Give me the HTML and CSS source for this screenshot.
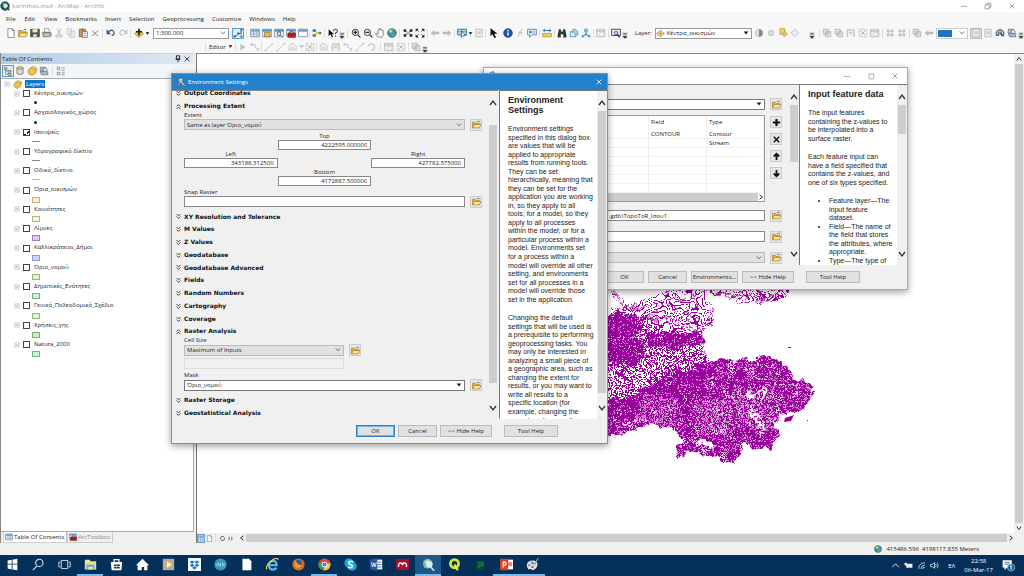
FILE: index.html
```html
<!DOCTYPE html>
<html lang="el">
<head>
<meta charset="utf-8">
<title>korinthos.mxd - ArcMap - ArcInfo</title>
<link rel="stylesheet" href="styles.css">
</head>
<body>
<svg class="sprite" aria-hidden="true">
  <symbol id="new" viewBox="0 0 16 16"><path d="M3 1h7l3 3v11H3z" fill="#fff" stroke="#555"/><path d="M10 1v3h3" fill="none" stroke="#555"/></symbol>
  <symbol id="open" viewBox="0 0 16 16"><path d="M1 14V4h5l1 2h6v3" fill="#e8b93c" stroke="#8d6b1c"/><path d="M1 14l3-6h12l-3 6z" fill="#ffe48a" stroke="#8d6b1c"/><path d="M9 3q3-3 5 1" fill="none" stroke="#3a7b3a" stroke-width="1.5"/></symbol>
  <symbol id="save" viewBox="0 0 16 16"><path d="M1 2h14v12H1z" fill="#55524a" stroke="#333"/><path d="M4 2h8v5H4z" fill="#e9edc2"/><path d="M5 10h6v4H5z" fill="#ddd"/></symbol>
  <symbol id="print" viewBox="0 0 16 16"><path d="M4 1h7l1 6H4z" fill="#fff" stroke="#777"/><path d="M1 7h13l1 5-3 2H2z" fill="#aaa" stroke="#555"/><path d="M4 10h7v3H4z" fill="#eed56a"/></symbol>
  <symbol id="cut" viewBox="0 0 16 16"><path d="M5 1l5 10M11 1L6 11" stroke="#bbb" stroke-width="1.5"/><circle cx="5" cy="13" r="2" fill="none" stroke="#bbb" stroke-width="1.5"/><circle cx="11" cy="13" r="2" fill="none" stroke="#bbb" stroke-width="1.5"/></symbol>
  <symbol id="copy" viewBox="0 0 16 16"><path d="M2 1h7v10H2zM6 5h8v10H6z" fill="#ececec" stroke="#bbb"/></symbol>
  <symbol id="paste" viewBox="0 0 16 16"><path d="M2 2h10v12H2z" fill="#c99a4a" stroke="#6b4b1c"/><path d="M5 1h4v3H5z" fill="#777"/><path d="M7 6h8v9H7z" fill="#fff" stroke="#446"/><path d="M9 9h4M9 12h4" stroke="#55a"/></symbol>
  <symbol id="del" viewBox="0 0 16 16"><path d="M3 4l10 9M13 4L3 13" stroke="#888" stroke-width="1.6"/></symbol>
  <symbol id="undo" viewBox="0 0 16 16"><path d="M3 7q7-7 10 0 0 4-4 5" fill="none" stroke="#2d5590" stroke-width="2"/><path d="M1 2v8h7z" fill="#2d5590"/></symbol>
  <symbol id="redo" viewBox="0 0 16 16"><path d="M13 7q-7-7-10 0 0 4 4 5" fill="none" stroke="#c3c3c3" stroke-width="2"/><path d="M15 2v8H8z" fill="#c3c3c3"/></symbol>
  <symbol id="add" viewBox="0 0 16 16"><path d="M8 3l7 6-7 6-7-6z" fill="#f3c33b" stroke="#9c7a14"/><path d="M8 1v11M3 6h10" stroke="#222" stroke-width="2.6"/></symbol>
  <symbol id="edit" viewBox="0 0 16 16"><path d="M2 13h3l4-4h4V3" fill="none" stroke="#333" stroke-width="1.3"/><path d="M1 12h3v3H1zM7 7h3v3H7zM12 1h3v3h-3zM12 12h3v3h-3z" fill="#2b5f93"/></symbol>
  <symbol id="table" viewBox="0 0 16 16"><path d="M1 2h14v12H1z" fill="#fff" stroke="#3d668f"/><path d="M1 2h14v4H1z" fill="#7eaedb"/><path d="M1 8h14M1 11h14M6 2v12M11 2v12" stroke="#6d8cad"/></symbol>
  <symbol id="catalog" viewBox="0 0 16 16"><path d="M1 2h14v12H1z" fill="#fff" stroke="#3d668f"/><path d="M1 2h14v4H1z" fill="#5b95cf"/><path d="M4 7h9v7H4z" fill="#e8c04a" stroke="#7b6420"/></symbol>
  <symbol id="searchw" viewBox="0 0 16 16"><path d="M1 2h14v12H1z" fill="#fff" stroke="#3d668f"/><path d="M1 2h14v4H1z" fill="#5b95cf"/><circle cx="8" cy="9" r="3" fill="#def" stroke="#345" stroke-width="1.3"/><path d="M10 11l4 4" stroke="#b98c2f" stroke-width="2"/></symbol>
  <symbol id="toolbox" viewBox="0 0 16 16"><path d="M1 2h14v11H1z" fill="#fff" stroke="#3d668f"/><path d="M1 2h14v3H1z" fill="#5b95cf"/><path d="M3 8h12v7H3z" fill="#c8262a" stroke="#701316"/><path d="M6 8V6h6v2M3 11h12" fill="none" stroke="#701316" stroke-width="1.3"/></symbol>
  <symbol id="python" viewBox="0 0 16 16"><path d="M1 2h14v12H1z" fill="#fff" stroke="#3d668f"/><path d="M1 2h14v4H1z" fill="#6b9fd2"/></symbol>
  <symbol id="model" viewBox="0 0 16 16"><path d="M3 4l6 4-6 4M8 8h5" fill="none" stroke="#555"/><path d="M1 2h5v4H1z" fill="#2f6fb6"/><path d="M1 10h5v4H1z" fill="#3e8a45"/><path d="M7 6h4v4H7z" fill="#e8c03c"/><circle cx="13" cy="8" r="2" fill="#3e8a45"/></symbol>
  <symbol id="what" viewBox="0 0 16 16"><path d="M1 2v11l3-3 2 5 2-1-2-4h4z" fill="#111"/><path d="M9 5q0-3 3-3t3 3q0 2-3 3v2M12 12v2" fill="none" stroke="#2750a0" stroke-width="1.8"/></symbol>
  <symbol id="zin" viewBox="0 0 16 16"><circle cx="7" cy="7" r="5" fill="#e9f2fa" stroke="#333" stroke-width="1.5"/><path d="M7 4v6M4 7h6M11 11l4 4" stroke="#222" stroke-width="1.9"/></symbol>
  <symbol id="zout" viewBox="0 0 16 16"><circle cx="7" cy="7" r="5" fill="#e9f2fa" stroke="#333" stroke-width="1.5"/><path d="M4 7h6M11 11l4 4" stroke="#222" stroke-width="1.9"/></symbol>
  <symbol id="pan" viewBox="0 0 16 16"><path d="M4 14l-3-5 1-1 3 2V3h2V1h2v2h2v1h2v7l-2 4z" fill="#fff" stroke="#666" stroke-width="1.2"/></symbol>
  <symbol id="globe" viewBox="0 0 16 16"><circle cx="8" cy="8" r="7" fill="#3d8ccb" stroke="#355"/><path d="M3 4q5-4 8 0l-3 4-3 1zM8 10l5-2q0 4-3 6z" fill="#69b550"/><circle cx="6" cy="5" r="2" fill="#fff" opacity=".6"/></symbol>
  <symbol id="app" viewBox="0 0 16 16"><circle cx="8" cy="8" r="7" fill="#1d5a66" stroke="#17424c"/><path d="M3 5q4-4 8-1l-3 3-3 1z" fill="#5d9d7a"/><circle cx="9" cy="8" r="3" fill="#cfe8ea" stroke="#fff"/><path d="M11 10l4 5" stroke="#333" stroke-width="2"/></symbol>
  <symbol id="fin" viewBox="0 0 16 16"><path d="M1 2h4v4H1zM11 2h4v4h-4zM1 10h4v4H1zM11 10h4v4h-4z" fill="#222"/><path d="M4 5l3 2M12 5L9 7M4 11l3-2M12 11L9 9" stroke="#222" stroke-width="1.5"/></symbol>
  <symbol id="fout" viewBox="0 0 16 16"><path d="M1 1h5L1 6zM15 1h-5l5 5zM1 15h5l-5-5zM15 15h-5l5-5z" fill="#222"/><path d="M2 2l4 4M14 2l-4 4M2 14l4-4M14 14l-4-4" stroke="#222"/></symbol>
  <symbol id="back" viewBox="0 0 16 16"><path d="M1 8l6-5v3h8v4H7v3z" fill="#bcbcbc"/></symbol>
  <symbol id="fwd" viewBox="0 0 16 16"><path d="M15 8L9 3v3H1v4h8v3z" fill="#bcbcbc"/></symbol>
  <symbol id="selfeat" viewBox="0 0 16 16"><path d="M1 2h14v9H1z" fill="#bfe3f0" stroke="#28759a" stroke-width="1.5"/><path d="M8 2v9M1 6h14" stroke="#28759a"/><path d="M7 5v10l3-3h4z" fill="#fff" stroke="#222"/></symbol>
  <symbol id="page" viewBox="0 0 16 16"><path d="M3 2h10v12H3z" fill="#f1f1f1" stroke="#bbb" stroke-width="1.5"/><path d="M6 5h5v5H6z" fill="#ccc"/></symbol>
  <symbol id="ptr" viewBox="0 0 16 16"><path d="M4 0v13l3-3 3 6 3-1-3-6h5z" fill="#111"/></symbol>
  <symbol id="info" viewBox="0 0 16 16"><circle cx="8" cy="8" r="7" fill="#1d58ad" stroke="#123a78"/><path d="M8 7v5" stroke="#fff" stroke-width="2.4"/><circle cx="8" cy="4" r="1.4" fill="#fff"/></symbol>
  <symbol id="bolt" viewBox="0 0 16 16"><path d="M12 1L5 8l3 1-5 6 9-8-3-1z" fill="#ccc" stroke="#ccc"/></symbol>
  <symbol id="popup" viewBox="0 0 16 16"><path d="M1 2h14v9H8l-4 4v-4H1z" fill="#e8f3fa" stroke="#3f7395" stroke-width="1.2"/><path d="M4 5h3v3H4zM9 5h4M9 8h4" stroke="#3f7395" fill="#68a0b9"/></symbol>
  <symbol id="measure" viewBox="0 0 16 16"><path d="M1 9h14v5H1z" fill="#f4d35a" stroke="#9a7a1e"/><path d="M2 4h12M2 4l3-3M2 4l3 3M14 4l-3-3M14 4l-3 3" stroke="#2f62a4" stroke-width="1.4"/></symbol>
  <symbol id="find" viewBox="0 0 16 16"><path d="M3 2h3l1 4h2l1-4h3l2 9v4h-5v-5H6v5H1v-4z" fill="#30353b"/></symbol>
  <symbol id="route" viewBox="0 0 16 16"><path d="M2 6h9v8H2z" fill="#dff0fa" stroke="#3f86ad" stroke-width="1.3"/><path d="M6 8V2h4l4 4v5H9" fill="#9fd0e8" stroke="#3f86ad"/></symbol>
  <symbol id="xy" viewBox="0 0 16 16"><circle cx="8" cy="4" r="2.6" fill="#9cc6e8" stroke="#2b6ba0"/><path d="M8 7v4M3 13l5-3 5 3" fill="none" stroke="#2b6ba0" stroke-width="1.6"/><circle cx="3" cy="13" r="2" fill="#5a9bd0"/><circle cx="13" cy="13" r="2" fill="#5a9bd0"/></symbol>
  <symbol id="time" viewBox="0 0 16 16"><path d="M1 2h13v12H1z" fill="#eee" stroke="#bbb" stroke-width="1.4"/><path d="M1 5h13" stroke="#bbb" stroke-width="2"/><circle cx="9" cy="10" r="3" fill="#fff" stroke="#bbb"/></symbol>
  <symbol id="viewer" viewBox="0 0 16 16"><path d="M1 2h14v10H1z" fill="#eef" stroke="#444" stroke-width="1.5"/><circle cx="8" cy="8" r="3" fill="#a9cfe9" stroke="#345"/><path d="M10 10l4 5" stroke="#334" stroke-width="2"/></symbol>
  <symbol id="contrast" viewBox="0 0 16 16"><circle cx="8" cy="8" r="6" fill="#ddd" stroke="#bbb"/><path d="M8 2a6 6 0 010 12z" fill="#888"/></symbol>
  <symbol id="sun" viewBox="0 0 16 16"><circle cx="8" cy="8" r="4" fill="#ddd" stroke="#ccc" stroke-width="2"/></symbol>
  <symbol id="lyr" viewBox="0 0 16 16"><path d="M3 1h8v9H3z" fill="#f4d46a" stroke="#b08a2a"/><path d="M6 9l5-4 4 5-5 4z" fill="#e7bf4b" stroke="#999"/></symbol>
  <symbol id="dia" viewBox="0 0 16 16"><path d="M8 2l6 6-6 6-6-6z" fill="#eee" stroke="#bbb" stroke-width="1.5"/></symbol>
  <symbol id="ydia" viewBox="0 0 16 16"><path d="M8 2l7 6-7 6-7-6z" fill="#f6dd9a" stroke="#b3863a" stroke-width="1.5"/><path d="M8 5v6M5 8h6" stroke="#8a6a2a"/></symbol>
  <symbol id="g1" viewBox="0 0 16 16"><path d="M2 2h8v8H2zM6 6h8v8H6z" fill="#e2e2e2" stroke="#b5b5b5" stroke-width="1.4"/><path d="M4 12l8-9" stroke="#aaa"/></symbol>
  <symbol id="g2" viewBox="0 0 16 16"><path d="M2 14V3h11v11" fill="#eee" stroke="#b8b8b8" stroke-width="1.6"/><path d="M5 6h5v3H5z" fill="#c4c4c4"/></symbol>
  <symbol id="g3" viewBox="0 0 16 16"><path d="M2 2h12v12H2z" fill="#f1f1f1" stroke="#bbb" stroke-width="1.4" stroke-dasharray="4 2"/><path d="M5 5l6 6M11 5l-6 6" stroke="#b0b0b0" stroke-width="1.4"/></symbol>
  <symbol id="g4" viewBox="0 0 16 16"><path d="M2 5h12M2 11h12M5 2v12M11 2v12" stroke="#bdbdbd" stroke-width="2"/></symbol>
  <symbol id="pause" viewBox="0 0 16 16"><path d="M5 4v8M11 4v8" stroke="#4b7fa8" stroke-width="2.5"/></symbol>
  <symbol id="fresh" viewBox="0 0 16 16"><path d="M3 9q0-6 6-6l3 2M13 7q0 6-6 6l-3-2" fill="none" stroke="#557" stroke-width="2"/></symbol>
  <symbol id="gline" viewBox="0 0 16 16"><path d="M3 13L13 3" stroke="#c5c5c5" stroke-width="1.5"/><path d="M1 12h3v3H1zM12 1h3v3h-3z" fill="#ccc"/></symbol>
  <symbol id="gplay" viewBox="0 0 16 16"><path d="M4 3v10l8-5z" fill="#bcbcbc"/></symbol>
  <symbol id="gnode" viewBox="0 0 16 16"><path d="M3 4h5v5M8 8l6 5" fill="none" stroke="#c5c5c5" stroke-width="1.5"/><path d="M1 2h4v4H1zM11 10h4v4h-4z" fill="#ccc"/></symbol>
  <symbol id="gpoly" viewBox="0 0 16 16"><path d="M2 13V5l6-3 5 4v7h-4V9H6v4z" fill="#f2f2f2" stroke="#c3c3c3" stroke-width="1.3"/></symbol>
  <symbol id="gturn" viewBox="0 0 16 16"><path d="M2 6q6-6 10 0 1 6-5 8" fill="none" stroke="#c3c3c3" stroke-width="2"/></symbol>
  <symbol id="bino" viewBox="0 0 16 16"><path d="M2 12V6q6-7 12 0v6h-4V8H6v4z" fill="#9bb2c6" stroke="#40566b" stroke-width="1.5"/><path d="M8 8l5 6" stroke="#333" stroke-width="1.5"/></symbol>
  <symbol id="disk" viewBox="0 0 16 16"><path d="M2 2h8l2 6H2zM2 9h12v5H4z" fill="#aebdca" stroke="#50606e"/><circle cx="10" cy="6" r="3" fill="#dcecf8" stroke="#50606e"/></symbol>
  <symbol id="chd" viewBox="0 0 8 8"><path d="M1 2l3 3 3-3" fill="none" stroke="#444"/></symbol>
  <symbol id="chu" viewBox="0 0 8 8"><path d="M1 6l3-4 3 4" fill="none" stroke="#333" stroke-width="1.3"/></symbol>
  <symbol id="chdn" viewBox="0 0 8 8"><path d="M1 2l3 4 3-4" fill="none" stroke="#333" stroke-width="1.3"/></symbol>
  <symbol id="chr" viewBox="0 0 8 8"><path d="M2 1l4 3-4 3" fill="none" stroke="#333" stroke-width="1.3"/></symbol>
  <symbol id="chl" viewBox="0 0 8 8"><path d="M6 1L2 4l4 3" fill="none" stroke="#333" stroke-width="1.3"/></symbol>
  <symbol id="tri" viewBox="0 0 8 8"><path d="M1 2h6L4 6z" fill="#111"/></symbol>
  <symbol id="dd" viewBox="0 0 8 10"><path d="M1 1l3 3 3-3M1 5l3 3 3-3" fill="none" stroke="#222" stroke-width="1.3"/></symbol>
  <symbol id="du" viewBox="0 0 8 10"><path d="M1 5l3-3 3 3M1 9l3-3 3 3" fill="none" stroke="#222" stroke-width="1.3"/></symbol>
  <symbol id="grip" viewBox="0 0 6 14"><path d="M0 6h6v8H0z" fill="#d5d5d5"/><path d="M1 8h4M1 11h4l-2 2z" stroke="#333" fill="#333"/></symbol>
  <symbol id="min" viewBox="0 0 10 10"><path d="M1 5.500h8" stroke="#999"/></symbol>
  <symbol id="max" viewBox="0 0 10 10"><path d="M2.500 2.500h6v6h-6z" fill="none" stroke="#999"/></symbol>
  <symbol id="rest" viewBox="0 0 10 10"><path d="M1.500 3.500h5v5h-5zM3.500 3V1.500h5v5H7" fill="none" stroke="#888"/></symbol>
  <symbol id="x" viewBox="0 0 10 10"><path d="M2 2l6 6M8 2L2 8" stroke="currentColor"/></symbol>
  <symbol id="pin" viewBox="0 0 10 10"><path d="M3 1h4v4H3zM2 5.500h6M5 6v3" fill="none" stroke="#222" stroke-width="1.200"/></symbol>
  <symbol id="hammer" viewBox="0 0 16 16"><path d="M3 3l5-2 4 3-2 3 5 6-2 2-6-6-2 5-3 1 3-8z" fill="#b9c6d2" stroke="#3b4a58"/></symbol>
  <symbol id="plus" viewBox="0 0 10 10"><path d="M5 1v8M1 5h8" stroke="#111" stroke-width="2.400"/></symbol>
  <symbol id="bx" viewBox="0 0 10 10"><path d="M2 2l6 6M8 2L2 8" stroke="#111" stroke-width="1.600"/></symbol>
  <symbol id="up" viewBox="0 0 10 10"><path d="M5 9V2M2 5l3-3 3 3" fill="none" stroke="#111" stroke-width="2"/></symbol>
  <symbol id="down" viewBox="0 0 10 10"><path d="M5 1v7M2 5l3 3 3-3" fill="none" stroke="#111" stroke-width="2"/></symbol>
  <symbol id="exp" viewBox="0 0 10 10"><path d="M1.500 1.500h7v7h-7z" fill="#fff" stroke="#aaa"/><path d="M3 5h4" stroke="#666"/></symbol>
  <symbol id="drum" viewBox="0 0 16 16"><path d="M3 3v9q5 4 10 0V3z" fill="#d5d8dc" stroke="#555"/><ellipse cx="8" cy="3" rx="5" ry="2" fill="#f2c84c" stroke="#666"/></symbol>
  <symbol id="treei" viewBox="0 0 16 16"><path d="M2 2h4v4H2zM8 7h5v3H8zM8 12h5v3H8z" fill="#e7c04b" stroke="#666"/><path d="M4 6v7h4M4 8h4" fill="none" stroke="#666"/></symbol>
  <symbol id="opts" viewBox="0 0 16 16"><path d="M2 2h4v4H2zM2 10h4v4H2zM9 3h5M9 7h5M9 11h5M9 14h5" fill="none" stroke="#777" stroke-width="1.200"/></symbol>
  <symbol id="lay" viewBox="0 0 16 16"><path d="M2 6l5-3 7 2v6l-6 4-6-3z" fill="#f0c542" stroke="#9d7b20"/><path d="M4 4l5-3 6 2v5" fill="none" stroke="#c39a31" stroke-width="1.5"/></symbol>
</svg>

<main class="app">
  <header class="titlebar"><svg class="i11"><use href="#app"/></svg><span class="wtitle">korinthos.mxd - ArcMap - ArcInfo</span>
    <div class="wbtns"><button aria-label="Minimize"><svg><use href="#min"/></svg></button><button aria-label="Restore"><svg><use href="#rest"/></svg></button><button aria-label="Close"><svg><use href="#x"/></svg></button></div>
  </header>
  <nav class="menu"><button>File</button><button>Edit</button><button>View</button><button>Bookmarks</button><button>Insert</button><button>Selection</button><button>Geoprocessing</button><button>Customize</button><button>Windows</button><button>Help</button></nav>

  <div class="bar">
    <button aria-label="New"><svg><use href="#new"/></svg></button><button aria-label="Open"><svg><use href="#open"/></svg></button><button aria-label="Save"><svg><use href="#save"/></svg></button><button aria-label="Print"><svg><use href="#print"/></svg></button><button aria-label="Cut"><svg><use href="#cut"/></svg></button><button aria-label="Copy"><svg><use href="#copy"/></svg></button><button aria-label="Paste"><svg><use href="#paste"/></svg></button><button aria-label="Delete"><svg><use href="#del"/></svg></button>
    <i class="sep mid"></i><button aria-label="Undo"><svg><use href="#undo"/></svg></button><button aria-label="Redo"><svg><use href="#redo"/></svg></button>
    <i class="sep mid"></i><button aria-label="Add data"><svg><use href="#add"/></svg></button><button class="caret" aria-label="Add data menu"><svg><use href="#tri"/></svg></button>
    <span class="pick scale"><select aria-label="Map scale"><option>1:300.000</option></select><svg><use href="#chd"/></svg></span>
    <button class="on" aria-label="Editor toolbar"><svg><use href="#edit"/></svg></button>
    <i class="sep wide"></i><button aria-label="Table of contents"><svg><use href="#table"/></svg></button><button aria-label="Catalog"><svg><use href="#catalog"/></svg></button><button aria-label="Search"><svg><use href="#searchw"/></svg></button><button aria-label="ArcToolbox"><svg><use href="#toolbox"/></svg></button><button aria-label="Python"><svg><use href="#python"/></svg></button>
    <i class="sep thin"></i><button aria-label="ModelBuilder"><svg><use href="#model"/></svg></button>
    <i class="sep mid"></i><button aria-label="What's this"><svg><use href="#what"/></svg></button><svg class="grip"><use href="#grip"/></svg>
    <i class="sep wide"></i><button aria-label="Zoom in"><svg><use href="#zin"/></svg></button><button aria-label="Zoom out"><svg><use href="#zout"/></svg></button><button aria-label="Pan"><svg><use href="#pan"/></svg></button><button aria-label="Full extent"><svg><use href="#globe"/></svg></button>
    <i class="sep mid"></i><button aria-label="Fixed zoom in"><svg><use href="#fin"/></svg></button><button aria-label="Fixed zoom out"><svg><use href="#fout"/></svg></button>
    <i class="sep"></i><button aria-label="Back"><svg><use href="#back"/></svg></button><button aria-label="Forward"><svg><use href="#fwd"/></svg></button>
    <i class="sep"></i><button aria-label="Select features"><svg><use href="#selfeat"/></svg></button><button class="caret" aria-label="Select menu"><svg><use href="#tri"/></svg></button><button aria-label="Clear selection"><svg><use href="#page"/></svg></button>
    <i class="sep thin"></i><button aria-label="Select elements"><svg><use href="#ptr"/></svg></button><i class="sep blank"></i><button aria-label="Identify"><svg><use href="#info"/></svg></button><button aria-label="Hyperlink"><svg><use href="#bolt"/></svg></button><button aria-label="HTML popup"><svg><use href="#popup"/></svg></button>
    <i class="sep"></i><button aria-label="Measure"><svg><use href="#measure"/></svg></button>
    <i class="sep"></i><button aria-label="Find"><svg><use href="#find"/></svg></button><button aria-label="Find route"><svg><use href="#route"/></svg></button><button aria-label="Go to XY"><svg><use href="#xy"/></svg></button>
    <i class="sep"></i><button aria-label="Time slider"><svg><use href="#time"/></svg></button><i class="sep"></i><button aria-label="Viewer window"><svg><use href="#viewer"/></svg></button><svg class="grip"><use href="#grip"/></svg>
    <label class="laylab" for="layer">Layer:</label>
    <span class="pick layer"><svg class="lead"><use href="#ydia"/></svg><select id="layer"><option>Κέντρα_οικισμών</option></select><svg><use href="#tri"/></svg></span>
    <button aria-label="Contrast"><svg><use href="#contrast"/></svg></button><button aria-label="Brightness"><svg><use href="#sun"/></svg></button><button aria-label="Transparency"><svg><use href="#lyr"/></svg></button><button aria-label="Swipe"><svg><use href="#dia"/></svg></button>
    <svg class="grip far"><use href="#grip"/></svg><i class="sep"></i>
    <button aria-label="Raster 1"><svg><use href="#g1"/></svg></button><button aria-label="Raster 2"><svg><use href="#g1"/></svg></button><button aria-label="Raster 3"><svg><use href="#g2"/></svg></button><button aria-label="Raster 4"><svg><use href="#g3"/></svg></button><button aria-label="Raster 5"><svg><use href="#time"/></svg></button>
    <i class="sep"></i><button aria-label="Grid 1"><svg><use href="#g4"/></svg></button><button aria-label="Grid 2"><svg><use href="#g4"/></svg></button>
    <i class="sep"></i><button aria-label="Previous"><svg><use href="#g1"/></svg></button><button aria-label="Next"><svg><use href="#back"/></svg></button>
    <span class="pick colour"><b class="chip"></b><select aria-label="Colour"><option></option></select><svg><use href="#chd"/></svg></span>
    <button class="held" aria-label="Layout"><svg><use href="#page"/></svg></button><button aria-label="Page"><svg><use href="#page"/></svg></button><button aria-label="Inspect"><svg><use href="#bino"/></svg></button><button aria-label="Export"><svg><use href="#disk"/></svg></button><svg class="grip"><use href="#grip"/></svg>
  </div>
  <div class="bar two">
    <i class="sep"></i><button class="word">Editor <svg><use href="#tri"/></svg></button><i class="sep thin"></i>
    <button aria-label="Edit tool"><svg><use href="#gplay"/></svg></button><button aria-label="Annotation tool"><svg><use href="#gnode"/></svg></button><i class="sep thin"></i><button aria-label="Straight"><svg><use href="#gline"/></svg></button><button aria-label="Arc"><svg><use href="#gline"/></svg></button><button aria-label="Trace"><svg><use href="#gpoly"/></svg></button><button class="caret" aria-label="Trace menu"><svg><use href="#chd"/></svg></button><button aria-label="Point"><svg><use href="#g3"/></svg></button>
    <i class="sep thin"></i><button aria-label="Vertices"><svg><use href="#gpoly"/></svg></button><button aria-label="Reshape"><svg><use href="#g2"/></svg></button><button aria-label="Cut polygons"><svg><use href="#gnode"/></svg></button><button aria-label="Split"><svg><use href="#gline"/></svg></button><button aria-label="Rotate"><svg><use href="#gturn"/></svg></button>
    <i class="sep wide"></i><button aria-label="Attributes"><svg><use href="#time"/></svg></button><button aria-label="Sketch"><svg><use href="#g3"/></svg></button><i class="sep"></i><button aria-label="Create"><svg><use href="#g1"/></svg></button><svg class="grip"><use href="#grip"/></svg>
  </div>

  <div class="work">
    <aside class="toc">
      <div class="tochead"><span>Table Of Contents</span><span class="pins"><svg><use href="#pin"/></svg><svg><use href="#x"/></svg></span></div>
      <div class="toctools"><button class="on" aria-label="By drawing order"><svg><use href="#treei"/></svg></button><button aria-label="By source"><svg><use href="#drum"/></svg></button><button aria-label="By visibility"><svg><use href="#lay"/></svg></button><button aria-label="By selection"><svg><use href="#disk"/></svg></button><i class="sep"></i><button aria-label="Options"><svg><use href="#opts"/></svg></button></div>
      <div class="tree">
        <div class="root"><svg class="ex"><use href="#exp"/></svg><svg class="fold"><use href="#lay"/></svg><b>Layers</b></div>
        <ul>
          <li><svg class="ex"><use href="#exp"/></svg><label><input type="checkbox">Κέντρα_οικισμών</label><i class="sym dot"></i></li>
          <li><svg class="ex"><use href="#exp"/></svg><label><input type="checkbox">Αρχαιολογικός_χώρος</label><i class="sym dot"></i></li>
          <li><svg class="ex"><use href="#exp"/></svg><label><input type="checkbox" checked>Ισουψείς</label><i class="sym line"></i></li>
          <li><svg class="ex"><use href="#exp"/></svg><label><input type="checkbox">Υδρογραφικό δίκτυο</label><i class="sym line"></i></li>
          <li><svg class="ex"><use href="#exp"/></svg><label><input type="checkbox">Οδικό_δίκτυο</label><i class="sym line pale"></i></li>
          <li><svg class="ex"><use href="#exp"/></svg><label><input type="checkbox">Όρια_οικισμών</label><i class="sym box sand"></i></li>
          <li><svg class="ex"><use href="#exp"/></svg><label><input type="checkbox">Κοινότητες</label><i class="sym box lime"></i></li>
          <li><svg class="ex"><use href="#exp"/></svg><label><input type="checkbox">Λίμνες</label><i class="sym box lilac"></i></li>
          <li><svg class="ex"><use href="#exp"/></svg><label><input type="checkbox">Καλλικράτειοι_Δήμοι</label><i class="sym box sky"></i></li>
          <li><svg class="ex"><use href="#exp"/></svg><label><input type="checkbox">Όριο_νομού</label><i class="sym box leaf"></i></li>
          <li><svg class="ex"><use href="#exp"/></svg><label><input type="checkbox">Δημοτικές_Ενότητες</label><i class="sym box mint"></i></li>
          <li><svg class="ex"><use href="#exp"/></svg><label><input type="checkbox">Γενικό_Πολεοδομικό_Σχέδιο</label><i class="sym box leaf"></i></li>
          <li><svg class="ex"><use href="#exp"/></svg><label><input type="checkbox">Χρήσεις_γης</label><i class="sym box green"></i></li>
          <li><svg class="ex"><use href="#exp"/></svg><label><input type="checkbox">Natura_2000</label><i class="sym box mint"></i></li>
        </ul>
      </div>
      <div class="tabs"><button class="cur"><svg><use href="#table"/></svg>Table Of Contents</button><button><svg><use href="#toolbox"/></svg>ArcToolbox</button></div>
    </aside>
    <section class="mapwrap">
      <div class="maprow">
        <div class="map">
          <svg class="contours" role="img" aria-label="Contour map">
            <defs>
              <filter id="lines" x="0" y="0" width="1" height="1"><feTurbulence type="fractalNoise" baseFrequency=".05" numOctaves="2" seed="5"/><feComponentTransfer result="n"><feFuncA type="discrete" tableValues="0 0 0 1 0 0 0 1 0 0 0 1 0 0 0 1 0 0 0 1 0 0 0 1 0 0 0 1 0 0 0 1 0 0 0 1 0 0 0 1 0 0 0 1 0 0 0 1 0 0 0 1"/></feComponentTransfer><feComposite in="SourceGraphic" in2="n" operator="in"/></filter>
              <filter id="mid" x="-.05" y="-.05" width="1.1" height="1.1"><feTurbulence type="fractalNoise" baseFrequency=".08" numOctaves="3" seed="9" result="t"/><feComponentTransfer in="t" result="n"><feFuncA type="discrete" tableValues="0 1 0 0 1 0 0 1 0 0 1 0 0 1 0 0 1 0 0 1 0 0 1 0 0 1 0 0 1 0 0 1 0 0 1 0 0 1 0 0 1 0 0 1 0 0 1"/></feComponentTransfer><feDisplacementMap in="SourceGraphic" in2="t" scale="12" xChannelSelector="R" yChannelSelector="G" result="d"/><feComposite in="d" in2="n" operator="in"/></filter>
              <filter id="dense" x="-.05" y="-.05" width="1.1" height="1.1"><feTurbulence type="fractalNoise" baseFrequency=".11" numOctaves="3" seed="3" result="t"/><feComponentTransfer in="t" result="n"><feFuncA type="discrete" tableValues="1 1 1 1 1 1 1 1 1 1 1 .4 1 1 .5 1 1 1 .4 1 .2 1 1 .3 1 .1 1 .3 1 0 1 0"/></feComponentTransfer><feDisplacementMap in="SourceGraphic" in2="t" scale="14" xChannelSelector="R" yChannelSelector="G" result="d"/><feComposite in="d" in2="n" operator="in"/></filter>
              <filter id="rag" x="-.2" y="-.2" width="1.4" height="1.4"><feTurbulence type="fractalNoise" baseFrequency=".16" numOctaves="2" seed="2" result="t"/><feDisplacementMap in="SourceGraphic" in2="t" scale="16" xChannelSelector="R" yChannelSelector="G"/></filter>
            </defs>
            <g transform="translate(-196 -54)" fill="#9a009c">
              <path filter="url(#lines)" d="M640 300L672 289H706L704 300 712 312 711 323 703 330 700 345 706 360 700 420H600V316z"/>
              <path filter="url(#lines)" d="M709 289H790L785 296 772 302 760 299 745 303 730 296z"/>
              <g fill="none" stroke="#9a009c"><path filter="url(#rag)" d="M607 289l19 18M607 311q12-5 28-4l18-3 12-5 4-10M672 305l8-6 9 5-3 10-9 2zM668 300l10-8 14 2 5 10-4 12-14 2-10-8zM690 300q14-12 15-10M709 292l17 4 15 6 18-3 9 4 9-5 9-9M712 290l20 5 18 0 16 4 10-8M640 318l22 0 20 10 16 3M650 310l16 6 18 8 16 4M712 310l-1 13-9 6M706 300l4 10-3 10-14 2M607 318q20-12 40-5M700 330l-2 14 8 14"/></g>
              <path fill="none" stroke="#9a009c" stroke-width="3" filter="url(#rag)" d="M712 294l10-3M758 294l12 6 6-4"/>
              <path filter="url(#mid)" d="M600 314L645 316 664 328 698 332 700 345 706 362 700 400 600 415z"/>
              <path filter="url(#dense)" d="M590 317L625 314 643 318 643 326 632 332 640 340 645 356 634 366 590 360z"/>
              <path filter="url(#dense)" d="M646 332L670 331 702 336 703 342 690 346 664 350 646 345z"/>
              <path filter="url(#dense)" d="M590 402L630 396 650 385 665 372 684 372 700 363 722 358 735 361 752 358 770 357 780 363 790 372 800 379 809 390 810 405 797 414 775 418 773 428 779 440 765 449 750 446 741 440 738 455 731 463 715 457 704 457 693 450 678 457 677 447 681 438 672 432 658 425 645 424 630 433 590 439z"/>
              <g fill="#fff" filter="url(#rag)"><path d="M746 396l10-5 11-4-3 5-9 5-9 3zM749 410l5 3 6 11 6 6-6-3-8-10zM694 440l10 1 8 5-3 2-11-3z"/></g>
              <g fill="#fff" opacity=".5"><path filter="url(#mid)" d="M735 385h34l6 45-20 6-25-34zM690 400h40v36h-36zM640 396h40l-8 30-36-4z"/></g>
              <path d="M784 418l9-3-3 6-7 1zM787 347h3v1h-3zM806 420h1v1h-1z"/>
            </g>
          </svg>
        </div>
        <div class="vs"><svg><use href="#chu"/></svg><i></i><svg><use href="#chdn"/></svg></div>
      </div>
      <div class="mapfoot"><button class="on" aria-label="Data view"><svg><use href="#table"/></svg></button><button aria-label="Layout view"><svg><use href="#new"/></svg></button><i class="sep wide"></i><button aria-label="Refresh"><svg><use href="#fresh"/></svg></button><button aria-label="Pause"><svg><use href="#pause"/></svg></button><div class="hs"><svg><use href="#chl"/></svg><i></i><svg><use href="#chr"/></svg></div></div>
    </section>
  </div>
  <footer class="status"><svg><use href="#globe"/></svg><span>415486.596&nbsp; 4198117.835 Meters</span></footer>
</main>

<section class="win topo" aria-label="Topo to Raster">
  <header><svg class="i11"><use href="#hammer"/></svg><span></span><div class="wbtns"><button aria-label="Minimize"><svg><use href="#min"/></svg></button><button aria-label="Maximize"><svg><use href="#max"/></svg></button><button aria-label="Close"><svg><use href="#x"/></svg></button></div></header>
  <div class="body">
    <div class="pane">
      <div class="fields">
        <div class="row"><span class="pick grow dark"><select aria-label="Input feature data"><option></option></select><svg><use href="#tri"/></svg></span><button class="br" aria-label="Browse"><svg><use href="#open"/></svg></button></div>
        <div class="row grid">
          <div class="tablebox"><table><thead><tr><th></th><th>Field</th><th>Type</th></tr></thead><tbody><tr><td></td><td>CONTOUR</td><td>Contour</td></tr><tr><td></td><td></td><td>Stream</td></tr><tr><td></td><td></td><td></td></tr><tr><td></td><td></td><td></td></tr><tr><td></td><td></td><td></td></tr><tr><td></td><td></td><td></td></tr><tr><td></td><td></td><td></td></tr></tbody></table><div class="hs"><i></i><svg><use href="#chr"/></svg></div></div>
          <div class="side"><button class="br" aria-label="Add"><svg><use href="#plus"/></svg></button><button class="br" aria-label="Remove"><svg><use href="#bx"/></svg></button><button class="br" aria-label="Up"><svg><use href="#up"/></svg></button><button class="br" aria-label="Down"><svg><use href="#down"/></svg></button></div>
        </div>
        <div class="row"><input class="grow path" type="text" aria-label="Output surface raster" value=".gdb\TopoToR_Ισου1"><button class="br" aria-label="Browse"><svg><use href="#open"/></svg></button></div>
        <div class="row"><input class="grow" type="text" aria-label="Output stream features"><button class="br" aria-label="Browse"><svg><use href="#open"/></svg></button></div>
        <div class="row"><span class="pick grow grey"><select aria-label="Output extent"><option></option></select><svg><use href="#chd"/></svg></span><button class="br" aria-label="Browse"><svg><use href="#open"/></svg></button></div>
      </div>
      <div class="vs"><svg><use href="#chu"/></svg><i></i><svg><use href="#chdn"/></svg></div>
    </div>
    <article class="help"><div class="txt"><h2>Input feature data</h2><p>The input features containing the z-values to be interpolated into a surface raster.</p><p>Each feature input can have a field specified that contains the z-values, and one of six types specified.</p><ul><li>Feature layer—The input feature dataset.</li><li>Field—The name of the field that stores the attributes, where appropriate.</li><li>Type—The type of</li></ul></div>
      <div class="vs"><svg><use href="#chu"/></svg><i></i><svg><use href="#chdn"/></svg></div></article>
  </div>
  <footer><button>OK</button><button>Cancel</button><button class="env">Environments...</button><button class="wide">&lt;&lt; Hide Help</button><button class="last">Tool Help</button></footer>
</section>

<section class="win envs" aria-label="Environment Settings">
  <header><svg class="i11"><use href="#hammer"/></svg><span>Environment Settings</span><div class="wbtns"><button aria-label="Close"><svg><use href="#x"/></svg></button></div></header>
  <div class="body">
    <div class="pane">
      <div class="secs">
        <h3><svg><use href="#dd"/></svg>Output Coordinates</h3>
        <h3><svg><use href="#du"/></svg>Processing Extent</h3>
        <div class="grp">
          <label for="extent">Extent</label>
          <div class="row"><span class="pick grow grey"><select id="extent"><option>Same as layer Όριο_νομού</option></select><svg><use href="#chd"/></svg></span><button class="br" aria-label="Browse extent"><svg><use href="#open"/></svg></button></div>
          <div class="compass">
            <div class="n"><label for="et">Top</label><input id="et" type="text" value="4222595.000000"></div>
            <div class="w"><label for="el">Left</label><input id="el" type="text" value="343188.312500"></div>
            <div class="e"><label for="er">Right</label><input id="er" type="text" value="427782.375000"></div>
            <div class="s"><label for="eb">Bottom</label><input id="eb" type="text" value="4172887.500000"></div>
          </div>
          <label for="snap">Snap Raster</label>
          <div class="row"><input id="snap" class="grow" type="text"><button class="br" aria-label="Browse snap raster"><svg><use href="#open"/></svg></button></div>
        </div>
        <h3><svg><use href="#dd"/></svg>XY Resolution and Tolerance</h3>
        <h3><svg><use href="#dd"/></svg>M Values</h3>
        <h3><svg><use href="#dd"/></svg>Z Values</h3>
        <h3><svg><use href="#dd"/></svg>Geodatabase</h3>
        <h3><svg><use href="#dd"/></svg>Geodatabase Advanced</h3>
        <h3><svg><use href="#dd"/></svg>Fields</h3>
        <h3><svg><use href="#dd"/></svg>Random Numbers</h3>
        <h3><svg><use href="#dd"/></svg>Cartography</h3>
        <h3><svg><use href="#dd"/></svg>Coverage</h3>
        <h3><svg><use href="#du"/></svg>Raster Analysis</h3>
        <div class="grp ras">
          <label for="cell">Cell Size</label>
          <div class="row"><span class="pick cell grey"><select id="cell"><option>Maximum of Inputs</option></select><svg><use href="#chd"/></svg></span><button class="br" aria-label="Browse cell size"><svg><use href="#open"/></svg></button></div>
          <input class="cell off" type="text" aria-label="Cell size value" disabled>
          <label for="mask">Mask</label>
          <div class="row"><span class="pick grow dark"><select id="mask"><option>Όριο_νομού</option></select><svg><use href="#tri"/></svg></span><button class="br" aria-label="Browse mask"><svg><use href="#open"/></svg></button></div>
        </div>
        <h3><svg><use href="#dd"/></svg>Raster Storage</h3>
        <h3><svg><use href="#dd"/></svg>Geostatistical Analysis</h3>
      </div>
      <div class="vs"><svg><use href="#chu"/></svg><i></i><svg><use href="#chdn"/></svg></div>
    </div>
    <article class="help"><div class="txt"><h2>Environment Settings</h2><p>Environment settings specified in this dialog box are values that will be applied to appropriate results from running tools. They can be set hierarchically, meaning that they can be set for the application you are working in, so they apply to all<br>tools; for a model, so they apply to all processes within the model; or for a particular process within a model. Environments set for a process within a model will override all other setting, and environments set for all processes in a model will override those set in the application.</p><p>Changing the default settings that will be used is a prerequisite to performing geoprocessing tasks. You may only be interested in analyzing a small piece of<br>a geographic area, such as changing the extent for results, or you may want to write all results to a<br>specific location (for example, changing the current workspace, the</p></div>
      <div class="vs"><svg><use href="#chu"/></svg><i></i><svg><use href="#chdn"/></svg></div></article>
  </div>
  <footer><button class="ok">OK</button><button>Cancel</button><button class="wide">&lt;&lt; Hide Help</button><button class="last">Tool Help</button></footer>
</section>

<nav class="taskbar" aria-label="Taskbar">
  <button aria-label="Start"><svg viewBox="0 0 16 16"><path d="M2 3l5-1v5H2zM8 2l6-1v6H8zM2 8h5v6l-5-1zM8 8h6v7l-6-1z" fill="#fff"/></svg></button>
  <button aria-label="Search"><svg viewBox="0 0 16 16"><circle cx="9" cy="6" r="4.500" fill="none" stroke="#dde6ef" stroke-width="1.300"/><path d="M6 10l-5 5" stroke="#dde6ef" stroke-width="1.300"/></svg></button>
  <button aria-label="Task view"><svg viewBox="0 0 16 16"><path d="M4 3h8v10H4zM3 5H1v6h2M13 5h2v6h-2" fill="none" stroke="#cbd8e5" stroke-width="1.200"/></svg></button>
  <button class="run" aria-label="Explorer"><svg viewBox="0 0 16 16"><path d="M1 2h6l1 2h7v10H1z" fill="#f5df86"/><path d="M3 8h10v6H3z" fill="#69b4dc"/><path d="M5 11h6v3H5z" fill="#f5df86"/></svg></button>
  <button aria-label="Store"><svg viewBox="0 0 16 16"><path d="M1 5h14l-1 10H2z" fill="#fff"/><path d="M5 6V2h6v4" fill="none" stroke="#fff" stroke-width="1.500"/><path d="M5 8h3v2H5zM8.500 8H12v2H8.500zM5 11h3v2H5zM8.500 11H12v2H8.500z" fill="#04305a"/></svg></button>
  <button aria-label="Home"><svg viewBox="0 0 16 16"><path d="M8 1l8 8h-2v6h-4v-4H7v4H2V9H0z" fill="#fff"/></svg></button>
  <button aria-label="Media player"><svg viewBox="0 0 16 16"><path d="M1 1h14v14H1z" fill="#8eb2d8"/><path d="M3 3h10v10H3z" fill="#e9a35a"/><path d="M6 4v8l6-4z" fill="#fff"/></svg></button>
  <button aria-label="Dropbox"><svg viewBox="0 0 16 16"><path d="M0 0h16v16H0z" fill="#f5f9fd"/><path d="M5 3l3 2-3 2-3-2zM11 3l3 2-3 2-3-2zM5 7l3 2-3 2-3-2zM11 7l3 2-3 2-3-2zM8 10l3 2-3 2-3-2z" fill="#1976d2"/></svg></button>
  <button aria-label="Assistant"><svg viewBox="0 0 16 16"><circle cx="8" cy="8" r="7.500" fill="#3d9abb"/><path d="M3 10l2-4 2 4M8 6v4M10 10l3-4M10 6l3 4" stroke="#b4e3ee" fill="none"/></svg></button>
  <button aria-label="Document"><svg viewBox="0 0 16 16"><path d="M3 1h8l3 3v11H3z" fill="#fff"/></svg></button>
  <button aria-label="Internet Explorer"><svg viewBox="0 0 16 16"><path d="M13 12q-4 4-8 1-3-4 0-8 4-3 7 0 1 2 1 4H5" fill="none" stroke="#5bc0ef" stroke-width="2.600"/><path d="M1 14Q-1 10 6 4t9-2" fill="none" stroke="#f2cf45" stroke-width="1.500"/></svg></button>
  <button aria-label="Firefox"><svg viewBox="0 0 16 16"><circle cx="8" cy="8" r="7.500" fill="#e66a1f"/><circle cx="8" cy="6" r="4" fill="#315d9c"/><path d="M3 3q3 2 5 5l4 1q-3 5-8 2z" fill="#f0a02e"/></svg></button>
  <button class="run" aria-label="Chrome"><svg viewBox="0 0 16 16"><circle cx="8" cy="8" r="7.500" fill="#dd4b3e"/><path d="M8 8L1 5q-2 7 6 10.500z" fill="#2aa351"/><path d="M8 8l7.500-2q0 9-8.500 9.500z" fill="#f6cb36"/><circle cx="8" cy="8" r="3.500" fill="#fff"/><circle cx="8" cy="8" r="2.500" fill="#3f7fe0"/></svg></button>
  <button aria-label="Skype"><svg viewBox="0 0 16 16"><circle cx="6" cy="6" r="5.500" fill="#17a9e6"/><circle cx="10" cy="10" r="5.500" fill="#17a9e6"/><circle cx="8" cy="8" r="6" fill="#17a9e6"/><path d="M11 5Q8 3 6 5q-1 2 2 3t2 3q-2 2-5 0" fill="none" stroke="#fff" stroke-width="1.800"/></svg></button>
  <button aria-label="Word"><svg viewBox="0 0 16 16"><path d="M7 2h8v12H7z" fill="#fff"/><path d="M9 5h5M9 8h5M9 11h5" stroke="#2b579a"/><path d="M0 2l9-2v16l-9-2z" fill="#2b579a"/><path d="M2 5l1 6 2-5 1 5 2-6" fill="none" stroke="#fff"/></svg></button>
  <button aria-label="Mendeley"><svg viewBox="0 0 16 16"><path d="M0 1h16v14H0z" fill="#a50f32"/><path d="M3 11q0-5 2.500-5T8 9q0-3 2.500-3T13 11" fill="none" stroke="#fff" stroke-width="1.800"/></svg></button>
  <button class="run active" aria-label="ArcMap"><svg viewBox="0 0 16 16"><circle cx="7" cy="7" r="6" fill="#77b9b3"/><path d="M3 4l5-2 2 4-4 4z" fill="#d3e3a5"/><circle cx="9" cy="8" r="3.500" fill="#d3eff5" stroke="#eee"/><path d="M11 11l4 5" stroke="#dde" stroke-width="2"/></svg></button>
  <button aria-label="QGIS"><svg viewBox="0 0 16 16"><circle cx="8" cy="7" r="5" fill="none" stroke="#cbe63a" stroke-width="3.500"/><path d="M8 8l4 7" stroke="#f1e33c" stroke-width="3"/></svg></button>
  <button aria-label="GIS tool"><svg viewBox="0 0 16 16"><path d="M3 4h9v10H3z" fill="#07522d"/><path d="M5 6h6v3H6v3" fill="none" stroke="#17833a" stroke-width="1.500"/></svg></button>
  <button class="run" aria-label="PowerPoint"><svg viewBox="0 0 16 16"><path d="M8 2h8v12H8z" fill="#fff"/><path d="M10 5h5v5h-5z" fill="#e58a69"/><path d="M0 1h10v14H0z" fill="#d24625"/><path d="M4 12V5h2q3 2 0 4H4" fill="none" stroke="#fff" stroke-width="1.500"/></svg></button>
  <button class="run" aria-label="Paint"><svg viewBox="0 0 16 16"><path d="M1 9q0-6 8-6 6 1 5 6-1 5-6 6-2-2-5-1-2-2-2-5z" fill="#dfe5e8"/><circle cx="4" cy="9" r="1.500" fill="#999"/><circle cx="8" cy="6" r="1.500" fill="#3a78bd"/><circle cx="8" cy="11" r="1.500" fill="#777"/><path d="M15 0l-5 9" stroke="#9a9a8a" stroke-width="1.500"/></svg></button>
  <div class="tray">
    <svg viewBox="0 0 16 16"><path d="M2 11l6-6 6 6" fill="none" stroke="#fff" stroke-width="1.500"/></svg>
    <svg viewBox="0 0 16 16"><path d="M4 5h11v7H4zM1 3h4v5H1z" fill="#e9eef3"/></svg>
    <svg viewBox="0 0 16 16"><path d="M3 14Q3 4 14 3M7 14q0-6 7-7M10 14q0-3 4-3" fill="none" stroke="#dce5ed" stroke-width="1.500"/></svg>
    <svg viewBox="0 0 16 16"><path d="M1 6h3l4-3v10l-4-3H1z" fill="none" stroke="#fff" stroke-width="1.200"/><path d="M10 5q2 3 0 6M13 3q3 5 0 10" fill="none" stroke="#fff" stroke-width="1.200"/></svg>
    <span>ΕΛ</span><time>22:58<br>06-Mar-17</time>
    <svg class="note" viewBox="0 0 20 20"><path d="M1 2h14v11H8l-4 4v-4H1z" fill="#fff"/><path d="M4 5h8M4 8h8" stroke="#04305a"/><circle cx="14" cy="13" r="5.500" fill="#15609c" stroke="#b8d3e8"/><path d="M12 11l2-1v6" fill="none" stroke="#fff" stroke-width="1.500"/></svg>
  </div>
</nav>
</body>
</html>
```
FILE: styles.css
```css
* { box-sizing: border-box; }
body { margin: 0; height: 100vh; display: flex; flex-direction: column; overflow: hidden; background: #f0f0f0; color: #222; font: 6px/8px "Open Sans", "Noto Sans", sans-serif; }
button, input, select { font: inherit; color: inherit; margin: 0; padding: 0; border: 0; background: none; border-radius: 0; outline: 0; }
button { display: flex; align-items: center; justify-content: center; white-space: nowrap; }
svg { display: block; flex: none; width: 8px; height: 8px; }
.sprite { position: absolute; width: 0; height: 0; }
.i11 { width: 10px; height: 10px; }
ul { list-style: none; margin: 0; padding: 0; }
.app { flex: 1; min-height: 0; display: flex; flex-direction: column; }

.titlebar { display: flex; align-items: center; height: 12px; background: #fff; }
.wtitle { color: #999; margin-left: 2px; }
.wbtns { display: flex; margin-left: auto; color: #888; }
.wbtns button { width: 24px; }
.menu { display: flex; height: 14px; padding-left: 2px; gap: 1px; background: #f7f7f7; }
.menu button { padding: 0 4px 0 3px; }
.menu button:nth-child(-n+3) { padding-left: 4px; }

.bar { display: flex; align-items: center; height: 14px; padding-left: 5px; background: #f7f7f7; }
.bar button { width: 12px; height: 11px; flex: none; }
.bar button svg { width: 10px; height: 10px; }
.bar button.caret { width: 5px; }
.bar .caret svg, .bar .word svg { width: 5px; height: 5px; }
.bar .word { width: auto; padding: 0 2px; gap: 2px; }
.bar .on, .on { background: #dceefb; box-shadow: inset 0 0 0 1px #5c9fd3; }
.held { background: #ddd; box-shadow: inset 0 0 0 1px #bbb; }
.sep { flex: none; width: 1px; height: 9px; margin: 0 1px; background: #ddd; }
.sep.thin { margin: 0 1px 0 0; }
.sep.mid { margin: 0 2px 0 1px; }
.sep.wide { margin: 0 2px; }
.sep.blank { background: none; }
.grip { width: 6px; height: 12px; }
.grip.far { margin-left: 8px; margin-right: 3px; }
.laylab { margin: 0 3px 0 7px; }
.two { height: 13px; padding-left: 204px; }

.pick { display: flex; align-items: center; height: 11px; border: 1px solid #999; background: #fff; padding-right: 2px; }
.pick select { appearance: none; flex: 1; min-width: 0; width: 0; height: 100%; padding-left: 2px; line-height: 8px; }
.pick > svg { width: 6px; height: 6px; }
.pick .lead { width: 9px; height: 9px; }
.scale { width: 78px; margin: 0 3px; }
.layer { width: 100px; margin-right: 1px; }
.colour { width: 33px; border-color: #ccc; padding-left: 1px; margin: 0 2px 0 1px; }
.chip { width: 14px; height: 7px; background: #1f75c4; }
.grey { background: #e1e1e1; border-color: #bbb; }
.dark { border-color: #777; }
.grow { flex: 1; min-width: 0; }

.work { flex: 1; min-height: 0; display: flex; }
.toc { width: 194px; display: flex; flex-direction: column; border-left: 1px solid #888; }
.tochead { display: flex; justify-content: space-between; align-items: center; height: 11px; padding: 0 3px 0 1px; background: linear-gradient(90deg, #b4cde6, #dfe9f3); border-top: 1px solid #c8d4e0; }
.pins { display: flex; gap: 1px; }
.toctools { display: flex; align-items: center; height: 14px; padding-left: 1px; background: #f3f6f9; }
.toctools button { width: 12px; height: 12px; }
.toctools svg { width: 10px; height: 10px; }
.toctools .sep { margin: 0 2px; }
.tree { flex: 1; background: #fff; border: 1px solid #aaa; border-left: 0; }
.ex { width: 6px; height: 6px; }
.root { display: flex; align-items: center; height: 10px; padding-left: 3px; gap: 3px; }
.root b { font-weight: 400; background: #0b74cf; color: #fff; padding: 0 1px; }
.fold { width: 9px; height: 9px; }
.tree li { display: grid; grid-template-columns: 9px 1fr; align-items: center; padding-left: 13px; line-height: 1.55; }
.tree label { display: flex; align-items: center; gap: 4px; }
.tree input { appearance: none; width: 7px; height: 7px; border: 1px solid #444; background: #fff; }
.tree input:checked { background: conic-gradient(from 200deg at 50% 80%, #111 60deg, #fff 60deg 190deg, #111 190deg 230deg, #fff 230deg); }
.sym { grid-column: 2; margin: 2px 0 2px 9px; width: 8px; height: 6px; justify-self: start; }
.dot { width: 3px; height: 3px; border-radius: 2px; background: #222; margin: 3px 0 4px 11px; }
.line { height: 1px; background: #888; margin-top: 4px; margin-bottom: 5px; }
.pale { background: #bbb; }
.box { border: 1px solid #999; }
.sand { background: #fdf0cf; border-color: #c7ae76; }
.lime { background: #f3f8d0; border-color: #b3b383; }
.lilac { background: #dfc8fa; border-color: #9c7fc0; }
.sky { background: #ccd5fa; border-color: #8f9bcb; }
.leaf { background: #dcf5c8; border-color: #94b57d; }
.mint { background: #c8f5d5; border-color: #74ae86; }
.green { background: #c3f3bb; border-color: #7bac75; }
.tabs { display: flex; height: 11px; padding-left: 2px; }
.tabs button { padding: 0 2px 0 1px; gap: 1px; border: 1px solid #ccc; border-top: 0; color: #888; }
.tabs .cur { background: #fff; color: #222; }

.mapwrap { flex: 1; min-width: 0; display: flex; flex-direction: column; margin-left: 2px; border-left: 1px solid #777; border-top: 1px solid #888; }
.maprow { flex: 1; min-height: 0; display: flex; }
.map { flex: 1; background: #fff; overflow: hidden; }
.contours { width: 100%; height: 100%; }
.mapfoot { display: flex; align-items: center; height: 10px; }
.mapfoot button { width: 8px; height: 9px; }
.mapfoot button svg { width: 7px; height: 7px; }
.hs { flex: 1; display: flex; align-items: center; }
.mapfoot .hs { padding: 0 10px 0 5px; gap: 1px; }
.hs i { flex: 1; height: 8px; background: #cdcdcd; }
.hs svg { width: 6px; height: 6px; }
.vs { display: flex; flex-direction: column; align-items: center; width: 10px; background: #f0f0f0; padding: 1px 0; }
.vs svg { margin: 2px 0; }
.vs i { width: 8px; background: #cdcdcd; }
.maprow .vs { padding: 0; }
.maprow .vs i { flex: 1; }
.maprow .vs svg { width: 6px; height: 6px; }
.status { display: flex; align-items: center; justify-content: flex-end; height: 12px; gap: 4px; padding-right: 45px; white-space: nowrap; }

.win { position: absolute; display: flex; flex-direction: column; background: #f0f0f0; box-shadow: 0 2px 7px rgba(0, 0, 0, .4); border: 1px solid #aaa; }
.win > header { display: flex; align-items: center; height: 16px; padding-left: 4px; gap: 2px; background: #fff; }
.win > .body { flex: 1; min-height: 0; display: flex; }
.win > footer { display: flex; height: 24px; align-items: center; gap: 4px; }
.win > footer button { width: 39px; height: 12px; background: #e1e1e1; border: 1px solid #bbb; }
.win > footer .wide { width: 52px; }
.win > footer .last { width: 54px; margin-left: 8px; }
.pane { flex: 1; min-width: 0; display: flex; border-top: 1px solid #888; }
.help { display: flex; width: 108px; background: #fff; border-left: 1px solid #777; border-top: 1px solid #777; font: 7px/1.22 "Liberation Sans", Arial, sans-serif; overflow: hidden; margin-left: 1px; }
.txt { flex: 1; min-width: 0; padding: 4px 3px 0 8px; }
.help h2 { margin: 0 0 10px; font-size: 9px; line-height: 10px; }
.help p { margin: 0 0 10px; }
.row { display: flex; align-items: center; gap: 5px; }
.br { width: 12px; height: 12px; background: #e6e6e6; border: 1px solid #ccc; flex: none; }
.br svg { width: 9px; height: 9px; }
input[type="text"] { height: 11px; border: 1px solid #888; background: #fff; padding: 0 3px; }

.topo { left: 483px; top: 67px; width: 425px; height: 223px; }
.topo > footer { padding-left: 121px; }
.topo > footer .env { width: 47px; }
.topo .fields { flex: 1; padding: 13px 7px 0 8px; display: flex; flex-direction: column; gap: 9px; overflow: hidden; }
.topo .pane .vs i { height: 57px; }
.topo .pane .vs svg:last-child, .envs .vs svg:last-child, .topo .help .vs svg:last-child { margin-top: auto; margin-bottom: 6px; }
.topo .pane .vs svg:first-child, .topo .help .vs svg:first-child { margin: 7px 0 4px; }
.topo .help .vs i { height: 29px; }
.topo .help { margin-left: 0; }
.topo .grid { align-items: flex-start; margin: -4px 0 -1px; }
.tablebox { flex: 1; border: 1px solid #999; background: #fff; }
.tablebox table { width: 100%; border-collapse: collapse; table-layout: fixed; }
.tablebox th { font-weight: 400; text-align: left; height: 13px; padding: 0 0 0 2px; border-right: 1px solid #eee; }
.tablebox th:nth-child(2) { width: 58px; }
.tablebox th:nth-child(3) { width: 57px; }
.tablebox td { height: 9px; padding: 0 0 0 2px; line-height: 8px; border-right: 1px solid #eee; border-bottom: 1px solid #f2f2f2; }
.tablebox tbody { border-top: 1px solid #fff; }
.side { display: grid; gap: 5px; padding-top: 1px; }
.path { text-indent: 113px; }
.help ul { list-style: disc; padding-left: 21px; }

.envs { left: 171px; top: 73px; width: 437px; height: 371px; border-color: #5a9ad0; }
.envs > header { background: #2580cb; color: #fff; }
.envs > header .wbtns { color: #fff; }
.envs > header .wbtns button { width: 17px; }
.envs > footer { padding-left: 184px; gap: 3px; }
.envs > footer .ok { border: 1px solid #2a7fc5; box-shadow: inset 0 0 0 1px #7fb4e0; }
.envs > footer .last { margin-left: 9px; }
.secs { flex: 1; min-width: 0; overflow: hidden; padding-left: 4px; margin-top: -4px; }
h3 { display: flex; align-items: center; gap: 3px; margin: 0; font: bold 6px/2.13 "DejaVu Sans", sans-serif; color: #111; }
h3 svg { width: 5px; height: 7px; }
.grp { padding: 0 6px 3px 8px; margin-top: -2px; }
.grp label { display: block; line-height: 8px; }
.compass { display: grid; grid-template-columns: 1fr 1fr 1fr; margin: 1px 17px 2px 0; }
.compass div { grid-column: 2; }
.compass input { width: 100%; height: 10px; text-align: right; display: block; }
.compass label { text-align: center; }
.compass .n { grid-row: 1; }
.compass .w { grid-column: 1; grid-row: 2; }
.compass .e { grid-column: 3; grid-row: 2; }
.compass .s { grid-row: 3; }
.cell { width: 160px; }
.cell.off { display: block; background: #f0f0f0; border-color: #ddd; margin: 2px 0; }
.envs .vs i { height: 258px; }
.envs .pane .vs svg:first-child { margin: 7px 0 18px; }
.envs .help .vs svg:first-child { margin: 7px 0 4px; }
.envs .help .vs i { height: 282px; }

.taskbar { display: flex; height: 21px; background: #04305a; color: #fff; }
.taskbar button { width: 26px; height: 21px; border-bottom: 2px solid transparent; }
.taskbar button:first-child { width: 25px; }
.taskbar svg { width: 13px; height: 13px; }
.taskbar .run { border-color: #76b9ed; }
.taskbar .active { background: #1c5787; }
.tray { display: flex; align-items: center; gap: 4px; margin-left: auto; padding-right: 9px; }
.tray span { margin: 0 5px; }
.tray time { text-align: center; line-height: 9px; }
.taskbar .tray > svg { width: 9px; height: 9px; }
.taskbar .tray > .note { width: 13px; height: 13px; margin-left: 5px; }
```
